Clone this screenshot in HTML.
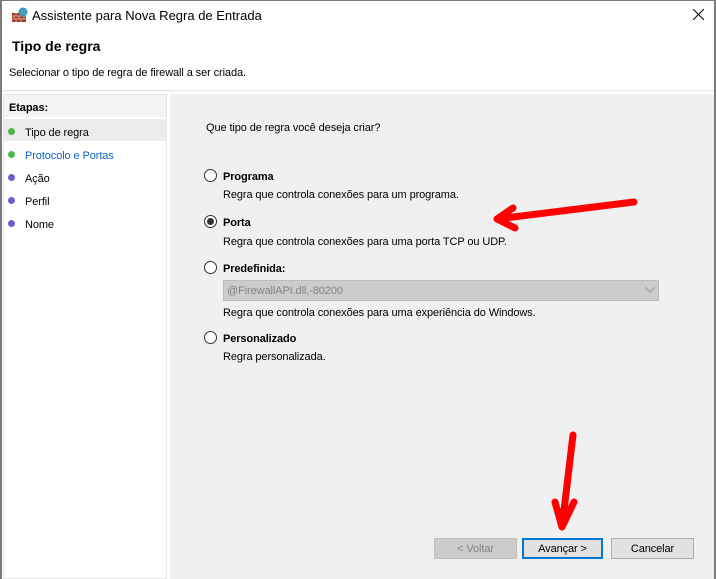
<!DOCTYPE html>
<html><head><meta charset="utf-8"><style>
*{margin:0;padding:0;box-sizing:border-box}
body{width:716px;height:579px;overflow:hidden;background:#fff;font-family:"Liberation Sans",sans-serif;font-size:11px;line-height:16px;letter-spacing:-0.1px;color:#000;position:relative}
.a{position:absolute;white-space:nowrap}
.radio{position:absolute;width:13px;height:13px;border:1px solid #333;border-radius:50%;background:#fff}
.dot{position:absolute;width:7px;height:7px;border-radius:50%}
.btn{position:absolute;height:21px;border:1px solid #adadad;background:#e1e1e1;text-align:center;line-height:21px}
</style></head><body>
<div class="a" style="left:0;top:0;width:2px;height:579px;background:#7a7a7a"></div>
<div class="a" style="left:714px;top:0;width:2px;height:579px;background:#7a7a7a"></div>
<div class="a" style="left:0;top:0;width:716px;height:1px;background:#7a7a7a"></div>
<svg class="a" style="left:11px;top:7px" width="18" height="16" viewBox="0 0 18 16"><rect x="1" y="6" width="14" height="9" fill="#9a3a2a"/><path d="M1 9h14M1 12h14M5 6v3M10 6v3M3 9v3M8 9v3M13 9v3M5 12v3M10 12v3" stroke="#d9a090" stroke-width="1"/><circle cx="12" cy="5" r="4.5" fill="#3b8fd6"/><path d="M9 4c2-1 4 0 6-1M10 7c2 0 3-1 5 0" stroke="#5fbf4f" stroke-width="1.2" fill="none"/></svg>
<div class="a" style="left:32px;top:8px;font-size:13px;line-height:normal;letter-spacing:0">Assistente para Nova Regra de Entrada</div>
<svg class="a" style="left:693px;top:9px" width="11" height="11"><path d="M0 0L11 11M11 0L0 11" stroke="#000" stroke-width="1"/></svg>
<div class="a" style="left:12px;top:38px;font-size:14px;line-height:normal;font-weight:bold;letter-spacing:0">Tipo de regra</div>
<div class="a" style="left:9px;top:65px">Selecionar o tipo de regra de firewall a ser criada.</div>
<div class="a" style="left:2px;top:90px;width:712px;height:1px;background:#e3e3e3"></div>
<div class="a" style="left:3px;top:94px;width:164px;height:485px;background:#fff;border:1px solid #e8e8e8"></div>
<div class="a" style="left:4px;top:95px;width:162px;height:22px;background:#f4f4f4"></div>
<div class="a" style="left:9px;top:100px;font-weight:bold">Etapas:</div>
<div class="a" style="left:4px;top:119px;width:162px;height:22px;background:#ececec"></div>
<div class="dot" style="left:8px;top:128px;background:#4cb84c"></div>
<div class="a" style="left:25px;top:125px">Tipo de regra</div>
<div class="dot" style="left:8px;top:151px;background:#4cb84c"></div>
<div class="a" style="left:25px;top:148px;color:#0a64c8">Protocolo e Portas</div>
<div class="dot" style="left:8px;top:174px;background:#6a5ed0"></div>
<div class="a" style="left:25px;top:171px">Ação</div>
<div class="dot" style="left:8px;top:197px;background:#6a5ed0"></div>
<div class="a" style="left:25px;top:194px">Perfil</div>
<div class="dot" style="left:8px;top:220px;background:#6a5ed0"></div>
<div class="a" style="left:25px;top:217px">Nome</div>
<div class="a" style="left:170px;top:94px;width:544px;height:485px;background:#f0f0f0"></div>
<div class="a" style="left:206px;top:120px">Que tipo de regra você deseja criar?</div>
<div class="radio" style="left:204px;top:169px"></div>
<div class="a" style="left:223px;top:169px;font-weight:bold">Programa</div>
<div class="a" style="left:223px;top:187px">Regra que controla conexões para um programa.</div>
<div class="radio" style="left:204px;top:215px"><div style="position:absolute;left:2px;top:2px;width:7px;height:7px;border-radius:50%;background:#333"></div></div>
<div class="a" style="left:223px;top:215px;font-weight:bold">Porta</div>
<div class="a" style="left:223px;top:234px">Regra que controla conexões para uma porta TCP ou UDP.</div>
<div class="radio" style="left:204px;top:261px"></div>
<div class="a" style="left:223px;top:261px;font-weight:bold">Predefinida:</div>
<div class="a" style="left:223px;top:280px;width:436px;height:21px;background:#cccccc;border:1px solid #bcbcbc;color:#838383;padding:2px 3px;line-height:17px">@FirewallAPI.dll,-80200</div>
<svg class="a" style="left:645px;top:287px" width="10" height="6"><path d="M0 0L5 5L10 0" stroke="#9a9a9a" fill="none"/></svg>
<div class="a" style="left:223px;top:305px">Regra que controla conexões para uma experiência do Windows.</div>
<div class="radio" style="left:204px;top:331px"></div>
<div class="a" style="left:223px;top:331px;font-weight:bold">Personalizado</div>
<div class="a" style="left:223px;top:349px">Regra personalizada.</div>
<svg class="a" style="left:0;top:0" width="716" height="579"><path d="M634 202L497 219M497 219L513 208M497 219L515 228" stroke="#f00" stroke-width="7" stroke-linecap="round" stroke-linejoin="round" fill="none"/><path d="M573 435L562 527M562 527L555 502M562 527L574 502" stroke="#f00" stroke-width="7" stroke-linecap="round" stroke-linejoin="round" fill="none"/></svg>
<div class="btn" style="left:434px;top:538px;width:83px;background:#cccccc;border-color:#bfbfbf;color:#838383">&lt; Voltar</div>
<div class="btn" style="left:522px;top:538px;width:81px;border:2px solid #0078d7;line-height:19px">Avançar &gt;</div>
<div class="btn" style="left:611px;top:538px;width:83px">Cancelar</div>
</body></html>
